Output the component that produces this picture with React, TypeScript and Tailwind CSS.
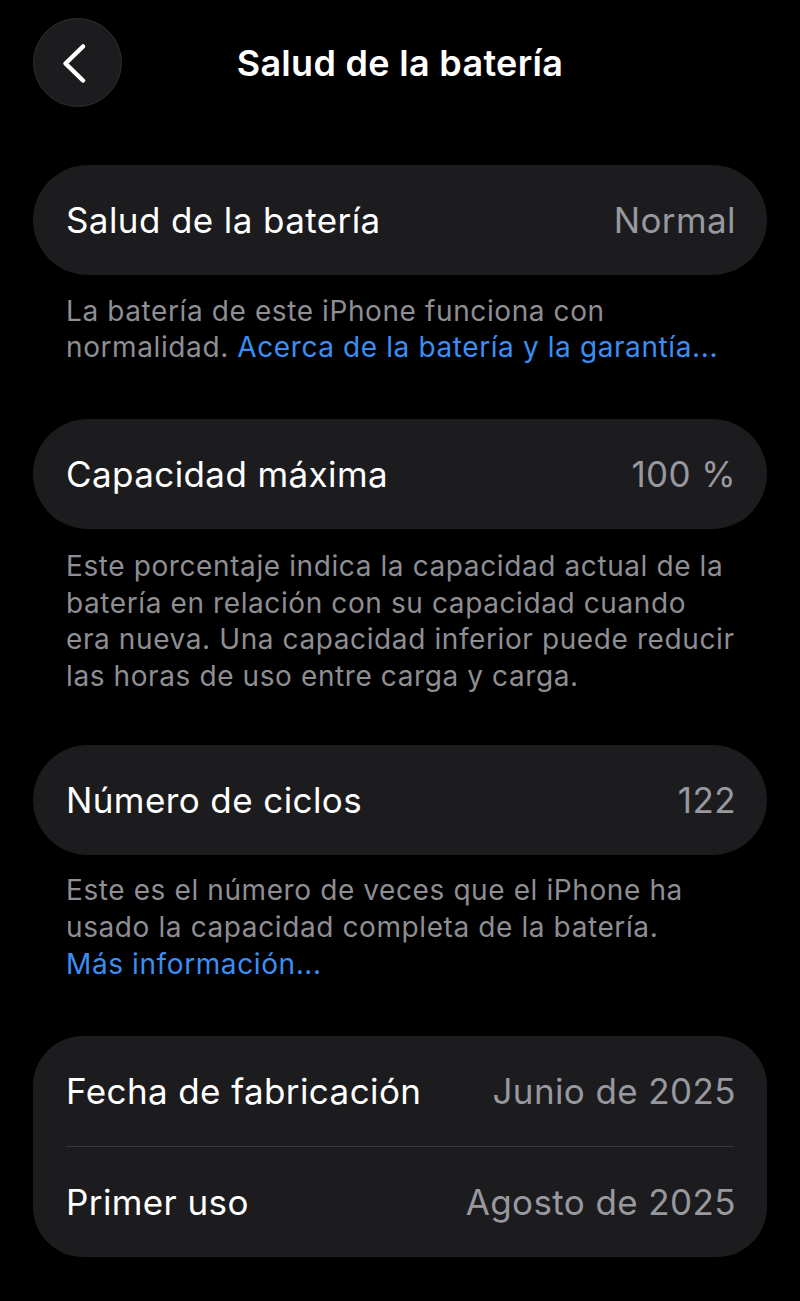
import React from "react";

const font = { fontFamily: "Inter, 'Noto Sans', sans-serif" };

function Row({ label, value }: { label: string; value: string }) {
  return (
    <div className="flex h-[110px] items-center justify-between pl-[33px] pr-[33px]">
      <span className="text-[35px] text-white tracking-[0.4px]">{label}</span>
      <span className="text-[35px] text-[#98989f] tracking-[0.4px] -mr-[2px]">{value}</span>
    </div>
  );
}

export default function App() {
  return (
    <div className="min-h-[1301px] w-[800px] bg-black" style={font}>
      <div className="px-[33px] pt-[18px]">
        <div className="relative flex h-[89px] items-center">
          <div className="flex h-[89px] w-[89px] items-center justify-start pl-[28px] rounded-full border border-[#2e2e30] bg-[#1c1c1e]">
            <svg width="26" height="42" viewBox="0 0 26 42" fill="none">
              <path d="M21 4.5 L3.5 21.5 L21 38.5" stroke="white" strokeWidth="4.5" strokeLinecap="round" strokeLinejoin="round" />
            </svg>
          </div>
          <div className="absolute left-0 right-0 text-center text-[36px] font-semibold text-white tracking-[0.3px] pointer-events-none">
            Salud de la batería
          </div>
        </div>

        <div className="mt-[58px] rounded-[55px] bg-[#1c1c1e]">
          <Row label="Salud de la batería" value="Normal" />
        </div>
        <p className="mt-[18px] pl-[33px] whitespace-nowrap text-[28px] leading-[36px] text-[#8e8e93] tracking-[0.6px]">
          La batería de este iPhone funciona con
          <br />
          normalidad. <span className="text-[#3b8ef3]">Acerca de la batería y la garantía...</span>
        </p>

        <div className="mt-[54px] rounded-[55px] bg-[#1c1c1e]">
          <Row label="Capacidad máxima" value="100 %" />
        </div>
        <p className="mt-[19px] pl-[33px] whitespace-nowrap text-[28px] leading-[36.7px] text-[#8e8e93] tracking-[0.6px]">
          Este porcentaje indica la capacidad actual de la
          <br />
          batería en relación con su capacidad cuando
          <br />
          era nueva. Una capacidad inferior puede reducir
          <br />
          las horas de uso entre carga y carga.
        </p>

        <div className="mt-[50px] rounded-[55px] bg-[#1c1c1e]">
          <Row label="Número de ciclos" value="122" />
        </div>
        <p className="mt-[17px] pl-[33px] whitespace-nowrap text-[28px] leading-[37px] text-[#8e8e93] tracking-[0.6px]">
          Este es el número de veces que el iPhone ha
          <br />
          usado la capacidad completa de la batería.
          <br />
          <span className="text-[#3b8ef3]">Más información...</span>
        </p>

        <div className="mt-[53px] rounded-[50px] bg-[#1c1c1e]">
          <Row label="Fecha de fabricación" value="Junio de 2025" />
          <div className="mx-[33px] h-px bg-[#3a3a3c]" />
          <Row label="Primer uso" value="Agosto de 2025" />
        </div>
      </div>
    </div>
  );
}
